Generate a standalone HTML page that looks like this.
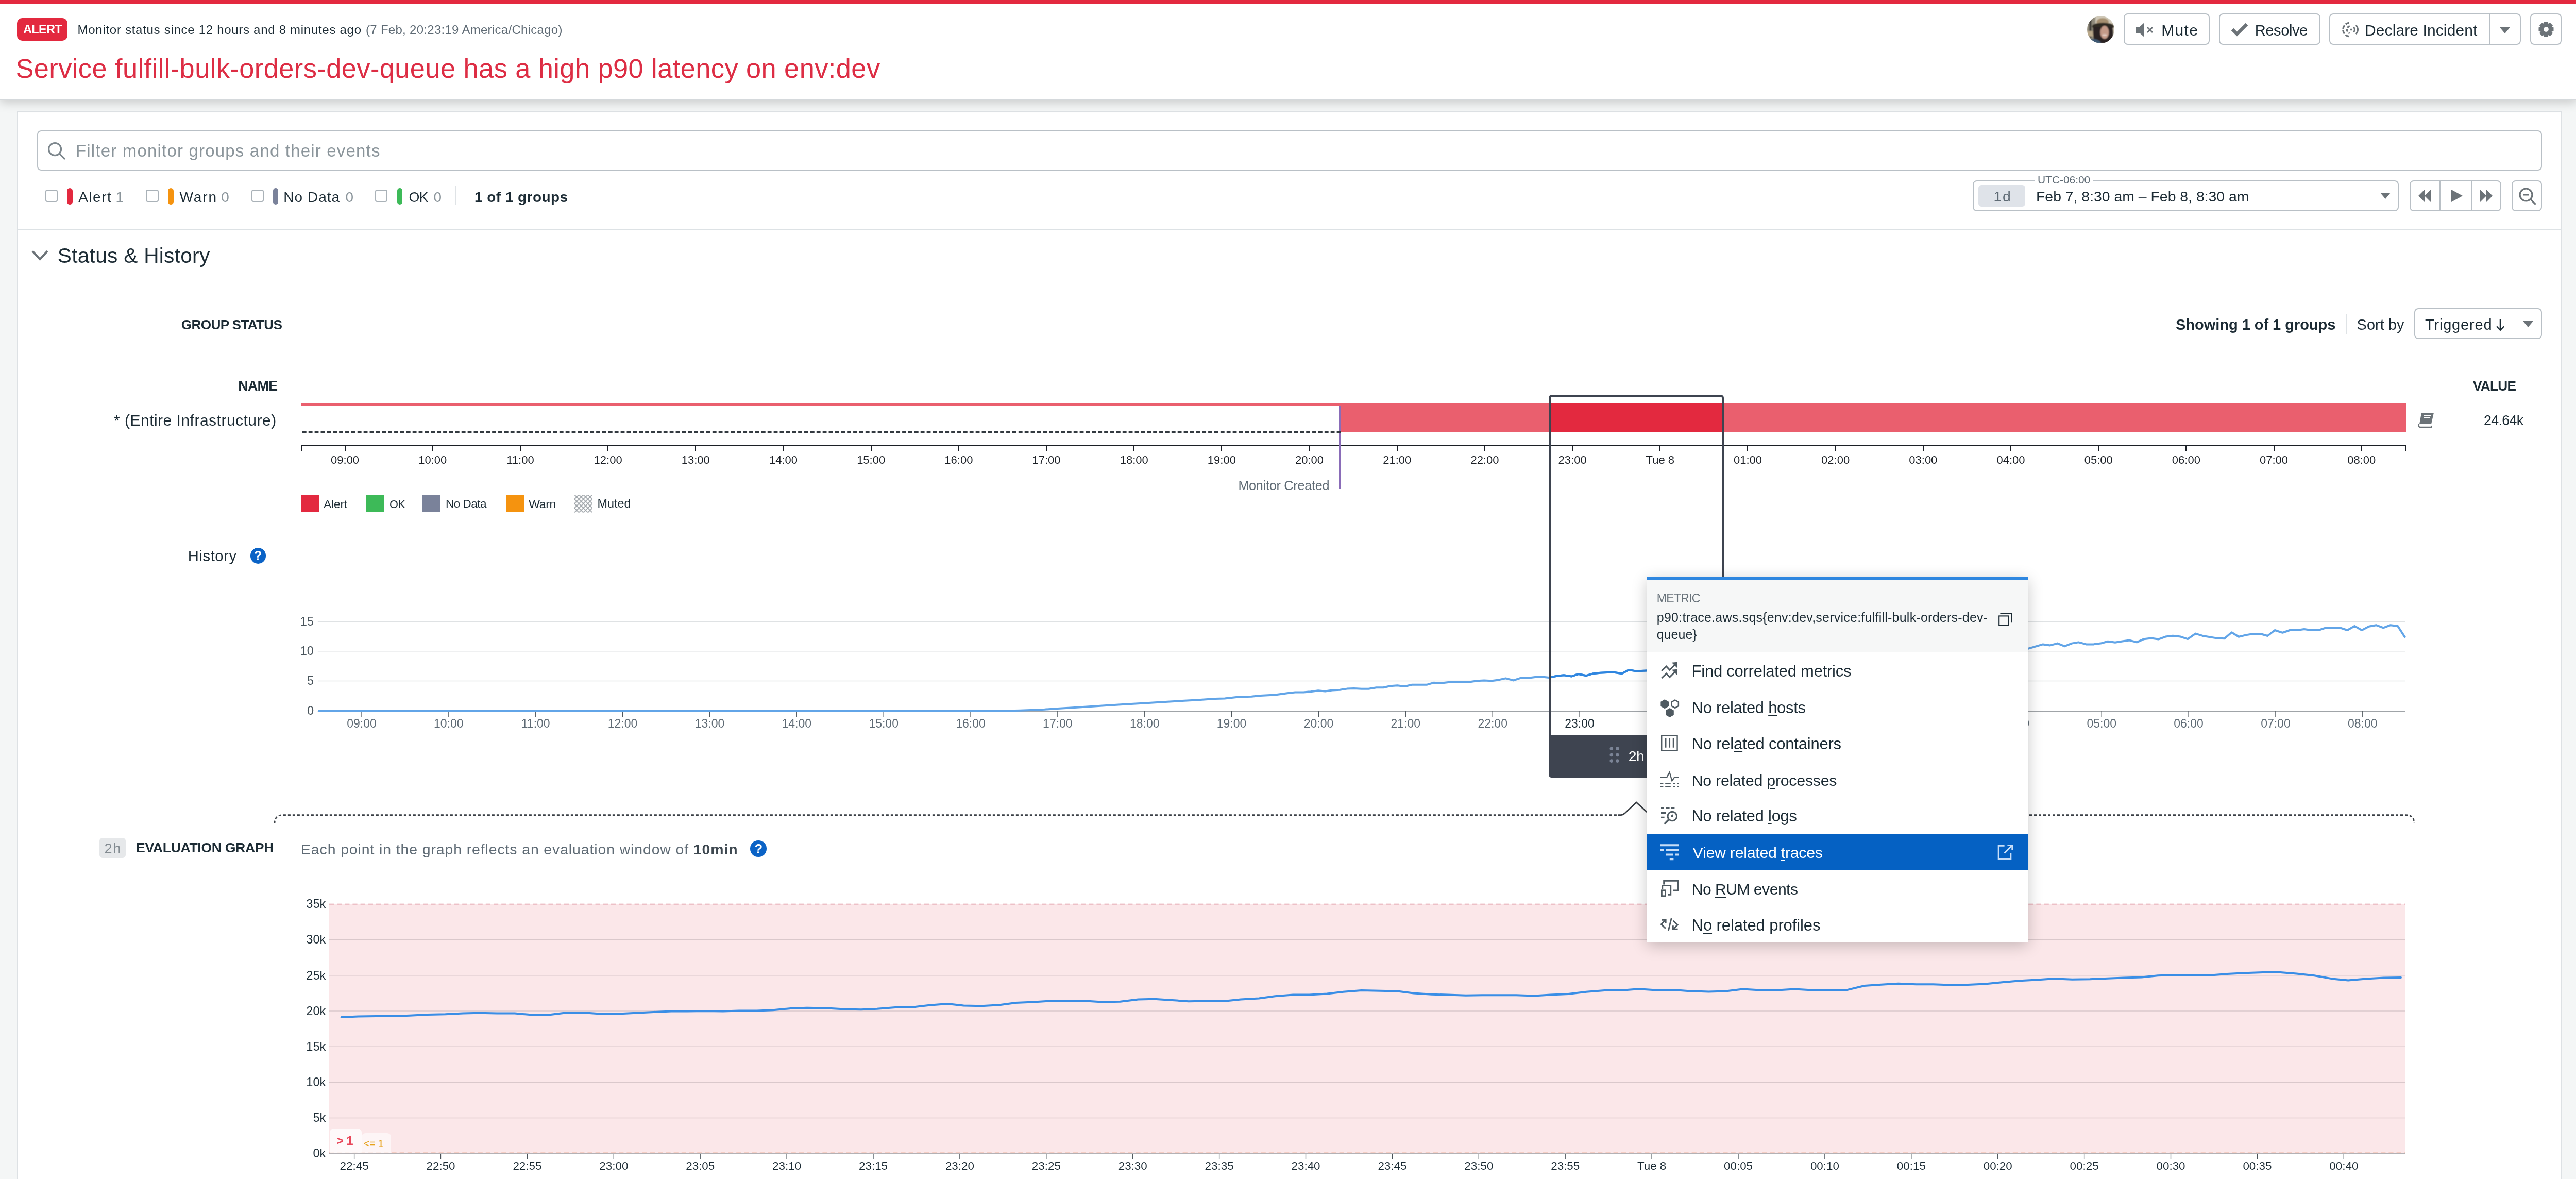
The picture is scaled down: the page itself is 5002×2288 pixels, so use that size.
<!DOCTYPE html>
<html><head><meta charset="utf-8"><style>
html,body{margin:0;padding:0;background:#f4f6f6;overflow:hidden;width:5002px;height:2288px}
#w{zoom:2;will-change:transform;position:relative;width:2501px;height:1144px;overflow:hidden;font-family:"Liberation Sans", sans-serif;background:#f4f6f6}
.t{position:absolute;white-space:nowrap;line-height:1}
.a{position:absolute}
svg.a{overflow:visible}
u{text-decoration-thickness:1.2px;text-underline-offset:2.2px}
</style></head><body><div id="w">
<div class="a" style="left:0px;top:0px;width:2501px;height:96px;background:#fff;box-shadow:0 1px 0 #d5d9dc,0 3px 10px rgba(0,0,0,.2);z-index:5"></div><div class="a" style="left:0;top:0;width:2501px;height:96px;z-index:6"><div class="a" style="left:0px;top:0px;width:2501px;height:3.8px;background:#e3293f"></div><div class="a" style="left:16.5px;top:17.5px;width:49px;height:22px;background:#e3293f;border-radius:5px"></div></div><svg class="a" style="left:2025.5px;top:15.4px;z-index:7" width="26.5" height="26.5" viewBox="0 0 100 100"><defs><clipPath id="avc"><circle cx="50" cy="50" r="50"/></clipPath><filter id="avb"><feGaussianBlur stdDeviation="2.2"/></filter></defs><g clip-path="url(#avc)"><rect width="100" height="100" fill="#cfc8b8"/><g filter="url(#avb)"><rect x="0" y="0" width="30" height="100" fill="#8f8a7c"/><rect x="8" y="10" width="8" height="70" fill="#3b3a35"/><rect x="0" y="55" width="30" height="20" fill="#b9a88a"/><ellipse cx="57" cy="22" rx="22" ry="14" fill="#a58f70"/><ellipse cx="58" cy="38" rx="40" ry="13" fill="#2f2a24"/><path d="M22 40 Q20 95 35 100 H88 Q100 70 92 40 Z" fill="#2a2420"/><ellipse cx="64" cy="60" rx="16" ry="24" fill="#c49a88"/><ellipse cx="64" cy="70" rx="9" ry="3" fill="#e6d2c8"/><path d="M0 88 Q25 78 48 92 L50 100 H0Z" fill="#3f5a74"/></g></g></svg><div class="a" style="left:2061px;top:13.1px;width:83.69999999999982px;height:30.6px;border:1px solid #b9c0c6;border-radius:4px;box-sizing:border-box;background:#fff;z-index:7;"></div><div class="a" style="left:2153.7px;top:13.1px;width:98.30000000000018px;height:30.6px;border:1px solid #b9c0c6;border-radius:4px;box-sizing:border-box;background:#fff;z-index:7;"></div><div class="a" style="left:2260.7px;top:13.1px;width:185.80000000000018px;height:30.6px;border:1px solid #b9c0c6;border-radius:4px;box-sizing:border-box;background:#fff;z-index:7;"></div><div class="a" style="left:2416px;top:13.1px;width:1px;height:30.6px;background:#b9c0c6;z-index:8"></div><div class="a" style="left:2455.5px;top:13.1px;width:30.5px;height:30.6px;border:1px solid #b9c0c6;border-radius:4px;box-sizing:border-box;background:#fff;z-index:7;"></div><svg class="a" style="left:2073px;top:21px;z-index:8" width="18" height="16" viewBox="0 0 18 16"><path d="M0 5h3.5L8 1v14L3.5 11H0z" fill="#6c7378"/><path d="M11 5.5l5 5M16 5.5l-5 5" stroke="#6c7378" stroke-width="1.4"/></svg><svg class="a" style="left:2165.5px;top:22px;z-index:8" width="16" height="13" viewBox="0 0 16 13"><path d="M1 6.5l4.5 4.5L15 1.5" stroke="#6c7378" stroke-width="3.2" fill="none"/></svg><svg class="a" style="left:2273.3px;top:21px;z-index:8" width="15" height="15.5" viewBox="0 0 15 15.5" fill="none" stroke="#6c7378" stroke-width="1.7"><path d="M6.2 1.2A6.6 6.6 0 0 0 6.2 14.3" stroke-dasharray="3.6 1.5"/><path d="M6.8 4.3A3.6 3.6 0 0 0 6.8 11.2" stroke-dasharray="2.6 1.4"/><circle cx="8.3" cy="7.75" r="1.05" fill="#6c7378" stroke="none"/><path d="M10.6 5.3a3.3 3.3 0 0 1 0 4.9M12.9 3.5a5.8 5.8 0 0 1 0 8.5" stroke-width="1.5"/></svg><svg class="a" style="left:2426px;top:26.5px;z-index:8" width="10" height="6" viewBox="0 0 10 6"><path d="M0 0h10L5 6z" fill="#6c7378"/></svg><svg class="a" style="left:2463.6px;top:21.2px;z-index:8" width="15" height="15" viewBox="0 0 15 15"><path fill-rule="evenodd" fill="#6c7378" d="M12.61 5.22 L14.75 5.57 L14.75 9.43 L12.61 9.78 L12.73 9.50 L13.99 11.26 L11.26 13.99 L9.50 12.73 L9.78 12.61 L9.43 14.75 L5.57 14.75 L5.22 12.61 L5.50 12.73 L3.74 13.99 L1.01 11.26 L2.27 9.50 L2.39 9.78 L0.25 9.43 L0.25 5.57 L2.39 5.22 L2.27 5.50 L1.01 3.74 L3.74 1.01 L5.50 2.27 L5.22 2.39 L5.57 0.25 L9.43 0.25 L9.78 2.39 L9.50 2.27 L11.26 1.01 L13.99 3.74 L12.73 5.50Z M7.5 5.1a2.4 2.4 0 1 0 0.001 0z"/></svg><div class="a" style="left:16.6px;top:107.6px;width:2470px;height:1100px;background:#fff;border:1px solid #dde1e4;box-sizing:border-box"></div><div class="a" style="left:36px;top:126.5px;width:2431.2px;height:39px;border:1px solid #b9c0c6;border-radius:4px;box-sizing:border-box"></div><svg class="a" style="left:46px;top:137.5px" width="18" height="18" viewBox="0 0 18 18" fill="none" stroke="#7d878d" stroke-width="1.6"><circle cx="7.3" cy="7.3" r="6"/><path d="M11.6 11.6l5.4 5.4"/></svg><div class="a" style="left:44px;top:184px;width:12.2px;height:12.2px;border:1px solid #aab2b8;border-radius:2px;box-sizing:border-box"></div><div class="a" style="left:65px;top:182.7px;width:5.3px;height:15.6px;background:#e3293f;border-radius:3px"></div><div class="a" style="left:141.6px;top:184px;width:12.2px;height:12.2px;border:1px solid #aab2b8;border-radius:2px;box-sizing:border-box"></div><div class="a" style="left:163px;top:182.7px;width:5.3px;height:15.6px;background:#f5930f;border-radius:3px"></div><div class="a" style="left:243.8px;top:184px;width:12.2px;height:12.2px;border:1px solid #aab2b8;border-radius:2px;box-sizing:border-box"></div><div class="a" style="left:264.8px;top:182.7px;width:5.3px;height:15.6px;background:#7a829a;border-radius:3px"></div><div class="a" style="left:364px;top:184px;width:12.2px;height:12.2px;border:1px solid #aab2b8;border-radius:2px;box-sizing:border-box"></div><div class="a" style="left:385.3px;top:182.7px;width:5.3px;height:15.6px;background:#3dba58;border-radius:3px"></div><div class="a" style="left:441.3px;top:180.5px;width:1px;height:18.5px;background:#dfe3e6"></div><div class="a" style="left:1914.7px;top:174.9px;width:413.3px;height:30.1px;border:1px solid #b9c0c6;border-radius:4px;box-sizing:border-box"></div><div class="a" style="left:1974.7px;top:172px;width:57px;height:5px;background:#fff"></div><div class="a" style="left:1920.1px;top:179.4px;width:45.6px;height:21.1px;background:#dfe3e9;border-radius:3px"></div><svg class="a" style="left:2310px;top:187px" width="10" height="6" viewBox="0 0 10 6"><path d="M0 0h10L5 6z" fill="#6c7378"/></svg><div class="a" style="left:2338.4px;top:174.9px;width:89px;height:30.1px;border:1px solid #b9c0c6;border-radius:4px;box-sizing:border-box"></div><div class="a" style="left:2367.6px;top:174.9px;width:1px;height:30.1px;background:#b9c0c6"></div><div class="a" style="left:2397.8px;top:174.9px;width:1px;height:30.1px;background:#b9c0c6"></div><svg class="a" style="left:2346px;top:183px" width="14" height="14" viewBox="0 0 14 14"><path d="M7 1L1 7l6 6zM13 1L7 7l6 6z" fill="#6c7378"/></svg><svg class="a" style="left:2377px;top:183px" width="14" height="14" viewBox="0 0 14 14"><path d="M2 1l11 6-11 6z" fill="#6c7378"/></svg><svg class="a" style="left:2406px;top:183px" width="14" height="14" viewBox="0 0 14 14"><path d="M1 1l6 6-6 6zM7 1l6 6-6 6z" fill="#6c7378"/></svg><div class="a" style="left:2437.5px;top:174.9px;width:29.7px;height:30.1px;border:1px solid #b9c0c6;border-radius:4px;box-sizing:border-box"></div><svg class="a" style="left:2444px;top:181.5px" width="18" height="18" viewBox="0 0 18 18" fill="none" stroke="#6c7378" stroke-width="1.6"><circle cx="7.5" cy="7.5" r="6"/><path d="M4.5 7.5h6M11.8 11.8l5 5"/></svg><div class="a" style="left:17px;top:222px;width:2468.8px;height:1px;background:#dde2e5"></div><svg class="a" style="left:30.5px;top:242.5px" width="16.5" height="11" viewBox="0 0 16.5 11"><path d="M1 1.2l7.25 7.8L15.5 1.2" stroke="#6c7378" stroke-width="2" fill="none"/></svg><div class="a" style="left:2276.6px;top:305px;width:1.2px;height:19px;background:#dfe3e6"></div><div class="a" style="left:2343px;top:299px;width:124.2px;height:30px;border:1px solid #b9c0c6;border-radius:4px;box-sizing:border-box"></div><svg class="a" style="left:2422px;top:309.5px" width="9" height="12" viewBox="0 0 9 12" fill="none" stroke="#1c2b34" stroke-width="1.25"><path d="M4.5 0.3V10.8M1 7.2L4.5 10.9L8 7.2"/></svg><svg class="a" style="left:2448.4px;top:311.5px" width="10" height="6" viewBox="0 0 10 6"><path d="M0 0h10L5 6z" fill="#6c7378"/></svg><svg class="a" style="left:2346px;top:399.5px" width="18" height="16" viewBox="0 0 18 16"><path d="M4 1h12l-2.5 11H2z" fill="#6c7378"/><path d="M2 12.2h11.5l-.3 1.3H1.8z" fill="#fff"/><path d="M1.5 12c-.6 2 0 3 1.5 3h10.5l.4-1.5" stroke="#6c7378" stroke-width="1.3" fill="none"/><path d="M6.5 3.5h6.5M6 5.5h6.5" stroke="#fff" stroke-width="1"/></svg><div class="a" style="left:292.2px;top:391.6px;width:1008.3px;height:2.2px;background:#ea5f6e"></div><div class="a" style="left:1300.5px;top:391.6px;width:1034.9px;height:27.3px;background:#ea5f6e"></div><svg class="a" style="left:292.2px;top:417.9px;z-index:1" width="1009.3" height="2"><line x1="0" y1="1" x2="1009.3" y2="1" stroke="#333a40" stroke-width="2" stroke-dasharray="3.9 2.04" stroke-dashoffset="-1.44"/></svg><div class="a" style="left:1504px;top:391.6px;width:167.7px;height:27.3px;background:#e3293f"></div><div class="a" style="left:292.2px;top:432px;width:2043.2px;height:1.1px;background:#1c2026"></div><div class="a" style="left:292.2px;top:432px;width:1px;height:6px;background:#1c2026"></div><div class="a" style="left:2334.4px;top:432px;width:1px;height:6px;background:#1c2026"></div><div class="a" style="left:334.3px;top:432px;width:1px;height:6px;background:#1c2026"></div><div class="a" style="left:419.39px;top:432px;width:1px;height:6px;background:#1c2026"></div><div class="a" style="left:504.48px;top:432px;width:1px;height:6px;background:#1c2026"></div><div class="a" style="left:589.57px;top:432px;width:1px;height:6px;background:#1c2026"></div><div class="a" style="left:674.6600000000001px;top:432px;width:1px;height:6px;background:#1c2026"></div><div class="a" style="left:759.75px;top:432px;width:1px;height:6px;background:#1c2026"></div><div class="a" style="left:844.84px;top:432px;width:1px;height:6px;background:#1c2026"></div><div class="a" style="left:929.9300000000001px;top:432px;width:1px;height:6px;background:#1c2026"></div><div class="a" style="left:1015.02px;top:432px;width:1px;height:6px;background:#1c2026"></div><div class="a" style="left:1100.1100000000001px;top:432px;width:1px;height:6px;background:#1c2026"></div><div class="a" style="left:1185.2px;top:432px;width:1px;height:6px;background:#1c2026"></div><div class="a" style="left:1270.29px;top:432px;width:1px;height:6px;background:#1c2026"></div><div class="a" style="left:1355.38px;top:432px;width:1px;height:6px;background:#1c2026"></div><div class="a" style="left:1440.47px;top:432px;width:1px;height:6px;background:#1c2026"></div><div class="a" style="left:1525.56px;top:432px;width:1px;height:6px;background:#1c2026"></div><div class="a" style="left:1610.65px;top:432px;width:1px;height:6px;background:#1c2026"></div><div class="a" style="left:1695.74px;top:432px;width:1px;height:6px;background:#1c2026"></div><div class="a" style="left:1780.83px;top:432px;width:1px;height:6px;background:#1c2026"></div><div class="a" style="left:1865.92px;top:432px;width:1px;height:6px;background:#1c2026"></div><div class="a" style="left:1951.01px;top:432px;width:1px;height:6px;background:#1c2026"></div><div class="a" style="left:2036.1000000000001px;top:432px;width:1px;height:6px;background:#1c2026"></div><div class="a" style="left:2121.19px;top:432px;width:1px;height:6px;background:#1c2026"></div><div class="a" style="left:2206.28px;top:432px;width:1px;height:6px;background:#1c2026"></div><div class="a" style="left:2291.3700000000003px;top:432px;width:1px;height:6px;background:#1c2026"></div><div class="a" style="left:1299.5px;top:393.8px;width:2px;height:80px;background:#8a6cb8"></div><div class="a" style="left:292px;top:479.9px;width:17.3px;height:17.3px;background:#e3293f"></div><div class="a" style="left:355.6px;top:479.9px;width:17.3px;height:17.3px;background:#3dba58"></div><div class="a" style="left:410.1px;top:479.9px;width:17.3px;height:17.3px;background:#7a829a"></div><div class="a" style="left:491.2px;top:479.9px;width:17.3px;height:17.3px;background:#f5930f"></div><svg class="a" style="left:557.5px;top:479.9px" width="17.3" height="17.3" viewBox="0 0 17.3 17.3"><defs><pattern id="hatch" width="4.33" height="4.33" patternUnits="userSpaceOnUse"><path d="M0 0L4.33 4.33M4.33 0L0 4.33" stroke="#9aa0a5" stroke-width="0.8"/></pattern></defs><rect width="17.3" height="17.3" fill="url(#hatch)"/></svg><div class="a" style="left:242.8px;top:531.6px;width:15.2px;height:15.2px;border-radius:50%;background:#0b63c6"></div><svg class="a" style="left:0;top:0" width="2501" height="1144" viewBox="0 0 2501 1144"><line x1="308.4" y1="660.76" x2="2334.4" y2="660.76" stroke="#dfe2e4" stroke-width="0.7"/><line x1="308.4" y1="631.93" x2="2334.4" y2="631.93" stroke="#dfe2e4" stroke-width="0.7"/><line x1="308.4" y1="603.10" x2="2334.4" y2="603.10" stroke="#dfe2e4" stroke-width="0.7"/><line x1="308.4" y1="690" x2="2334.4" y2="690" stroke="#80868b" stroke-width="0.75"/><line x1="351.00" y1="690" x2="351.00" y2="695.5" stroke="#50585e" stroke-width="0.65"/><line x1="435.43" y1="690" x2="435.43" y2="695.5" stroke="#50585e" stroke-width="0.65"/><line x1="519.86" y1="690" x2="519.86" y2="695.5" stroke="#50585e" stroke-width="0.65"/><line x1="604.29" y1="690" x2="604.29" y2="695.5" stroke="#50585e" stroke-width="0.65"/><line x1="688.72" y1="690" x2="688.72" y2="695.5" stroke="#50585e" stroke-width="0.65"/><line x1="773.15" y1="690" x2="773.15" y2="695.5" stroke="#50585e" stroke-width="0.65"/><line x1="857.58" y1="690" x2="857.58" y2="695.5" stroke="#50585e" stroke-width="0.65"/><line x1="942.01" y1="690" x2="942.01" y2="695.5" stroke="#50585e" stroke-width="0.65"/><line x1="1026.44" y1="690" x2="1026.44" y2="695.5" stroke="#50585e" stroke-width="0.65"/><line x1="1110.87" y1="690" x2="1110.87" y2="695.5" stroke="#50585e" stroke-width="0.65"/><line x1="1195.30" y1="690" x2="1195.30" y2="695.5" stroke="#50585e" stroke-width="0.65"/><line x1="1279.73" y1="690" x2="1279.73" y2="695.5" stroke="#50585e" stroke-width="0.65"/><line x1="1364.16" y1="690" x2="1364.16" y2="695.5" stroke="#50585e" stroke-width="0.65"/><line x1="1448.59" y1="690" x2="1448.59" y2="695.5" stroke="#50585e" stroke-width="0.65"/><line x1="1533.02" y1="690" x2="1533.02" y2="695.5" stroke="#50585e" stroke-width="0.65"/><line x1="1617.45" y1="690" x2="1617.45" y2="695.5" stroke="#50585e" stroke-width="0.65"/><line x1="1701.88" y1="690" x2="1701.88" y2="695.5" stroke="#50585e" stroke-width="0.65"/><line x1="1786.31" y1="690" x2="1786.31" y2="695.5" stroke="#50585e" stroke-width="0.65"/><line x1="1870.74" y1="690" x2="1870.74" y2="695.5" stroke="#50585e" stroke-width="0.65"/><line x1="1955.17" y1="690" x2="1955.17" y2="695.5" stroke="#50585e" stroke-width="0.65"/><line x1="2039.60" y1="690" x2="2039.60" y2="695.5" stroke="#50585e" stroke-width="0.65"/><line x1="2124.03" y1="690" x2="2124.03" y2="695.5" stroke="#50585e" stroke-width="0.65"/><line x1="2208.46" y1="690" x2="2208.46" y2="695.5" stroke="#50585e" stroke-width="0.65"/><line x1="2292.89" y1="690" x2="2292.89" y2="695.5" stroke="#50585e" stroke-width="0.65"/></svg><svg class="a" style="left:0;top:0" width="2501" height="1144" viewBox="0 0 2501 1144"><defs><clipPath id="selc"><rect x="1504" y="560" width="168" height="140"/></clipPath></defs><polyline points="308.8,689.6 980.0,689.6 990.1,689.4 1003.6,688.9 1013.8,688.4 1026.4,687.5 1039.1,686.8 1056.8,685.6 1073.7,684.5 1091.5,683.4 1110.9,682.2 1131.1,681.0 1149.7,679.9 1161.5,679.2 1179.3,678.0 1188.5,677.8 1202.1,676.3 1214.7,675.9 1223.2,675.0 1237.5,674.3 1249.3,672.6 1256.9,671.8 1265.1,671.8 1271.9,671.1 1279.3,670.1 1286.1,670.7 1292.9,669.8 1300.4,669.4 1307.2,668.3 1314.0,668.0 1321.4,668.4 1328.2,668.4 1335.7,667.1 1342.5,667.1 1349.3,665.6 1356.1,665.1 1363.5,666.0 1370.3,664.4 1377.1,664.4 1384.6,664.4 1391.4,662.4 1398.2,662.9 1405.6,662.0 1412.4,662.0 1419.2,661.6 1426.7,661.6 1433.5,660.6 1440.3,660.2 1447.7,660.6 1454.5,659.7 1461.3,658.2 1468.8,660.2 1475.6,657.9 1483.0,657.9 1489.8,657.0 1496.6,656.7 1503.4,657.5 1510.9,655.9 1517.7,655.1 1525.1,656.3 1531.9,654.0 1539.4,655.6 1546.2,653.6 1553.0,652.9 1559.8,652.5 1567.2,652.5 1574.0,653.6 1580.8,650.0 1588.3,651.3 1595.1,650.9 1604.8,650.4 1659.7,646.3 1744.1,641.2 1828.5,636.5 1913.0,632.5 1946.7,630.8 1968.2,629.4 1982.7,625.2 1989.7,626.2 1996.7,624.3 2003.7,627.1 2010.7,624.3 2017.2,623.2 2024.7,625.2 2031.7,625.2 2038.7,624.3 2045.7,622.4 2052.7,623.4 2059.7,622.3 2066.7,621.3 2073.7,623.2 2080.7,620.1 2087.7,619.2 2094.7,620.3 2101.7,617.8 2108.7,616.9 2116.2,617.8 2123.2,620.1 2130.7,614.8 2137.7,616.9 2137.8,617.0 2151.8,619.3 2158.8,619.6 2165.8,613.6 2172.7,617.9 2179.7,616.2 2186.7,615.0 2193.7,615.0 2200.7,617.0 2207.7,611.5 2215.2,613.9 2222.2,611.5 2229.2,611.5 2236.2,610.5 2243.2,611.5 2250.1,611.5 2257.1,609.2 2264.1,609.2 2271.1,609.2 2278.1,611.5 2285.1,607.5 2292.1,611.5 2299.1,607.9 2306.0,606.6 2313.0,609.2 2320.0,606.6 2327.0,607.5 2334.3,618.8" fill="none" stroke="#62a5e8" stroke-width="2" stroke-linejoin="round"/><polyline points="308.8,689.6 980.0,689.6 990.1,689.4 1003.6,688.9 1013.8,688.4 1026.4,687.5 1039.1,686.8 1056.8,685.6 1073.7,684.5 1091.5,683.4 1110.9,682.2 1131.1,681.0 1149.7,679.9 1161.5,679.2 1179.3,678.0 1188.5,677.8 1202.1,676.3 1214.7,675.9 1223.2,675.0 1237.5,674.3 1249.3,672.6 1256.9,671.8 1265.1,671.8 1271.9,671.1 1279.3,670.1 1286.1,670.7 1292.9,669.8 1300.4,669.4 1307.2,668.3 1314.0,668.0 1321.4,668.4 1328.2,668.4 1335.7,667.1 1342.5,667.1 1349.3,665.6 1356.1,665.1 1363.5,666.0 1370.3,664.4 1377.1,664.4 1384.6,664.4 1391.4,662.4 1398.2,662.9 1405.6,662.0 1412.4,662.0 1419.2,661.6 1426.7,661.6 1433.5,660.6 1440.3,660.2 1447.7,660.6 1454.5,659.7 1461.3,658.2 1468.8,660.2 1475.6,657.9 1483.0,657.9 1489.8,657.0 1496.6,656.7 1503.4,657.5 1510.9,655.9 1517.7,655.1 1525.1,656.3 1531.9,654.0 1539.4,655.6 1546.2,653.6 1553.0,652.9 1559.8,652.5 1567.2,652.5 1574.0,653.6 1580.8,650.0 1588.3,651.3 1595.1,650.9 1604.8,650.4 1659.7,646.3 1744.1,641.2 1828.5,636.5 1913.0,632.5 1946.7,630.8 1968.2,629.4 1982.7,625.2 1989.7,626.2 1996.7,624.3 2003.7,627.1 2010.7,624.3 2017.2,623.2 2024.7,625.2 2031.7,625.2 2038.7,624.3 2045.7,622.4 2052.7,623.4 2059.7,622.3 2066.7,621.3 2073.7,623.2 2080.7,620.1 2087.7,619.2 2094.7,620.3 2101.7,617.8 2108.7,616.9 2116.2,617.8 2123.2,620.1 2130.7,614.8 2137.7,616.9 2137.8,617.0 2151.8,619.3 2158.8,619.6 2165.8,613.6 2172.7,617.9 2179.7,616.2 2186.7,615.0 2193.7,615.0 2200.7,617.0 2207.7,611.5 2215.2,613.9 2222.2,611.5 2229.2,611.5 2236.2,610.5 2243.2,611.5 2250.1,611.5 2257.1,609.2 2264.1,609.2 2271.1,609.2 2278.1,611.5 2285.1,607.5 2292.1,611.5 2299.1,607.9 2306.0,606.6 2313.0,609.2 2320.0,606.6 2327.0,607.5 2334.3,618.8" fill="none" stroke="#2f86e0" stroke-width="2" stroke-linejoin="round" clip-path="url(#selc)"/></svg><div class="a" style="left:1503.2px;top:383px;width:169.6px;height:371.6px;border:2px solid #3e4450;border-radius:3px;box-sizing:border-box"></div><div class="a" style="left:1503.2px;top:713.5px;width:169.6px;height:41.1px;background:#3e4450;border-radius:0 0 3px 3px"></div><div class="a" style="left:1505.2px;top:752.3px;width:165.6px;height:0.6px;background:#c9ccd2"></div><svg class="a" style="left:1561.5px;top:724px" width="10" height="17" viewBox="0 0 10 17" fill="#7b8496"><circle cx="2.4" cy="2.4" r="1.65"/><circle cx="8.2" cy="2.4" r="1.65"/><circle cx="2.4" cy="8.5" r="1.65"/><circle cx="8.2" cy="8.5" r="1.65"/><circle cx="2.4" cy="14.3" r="1.65"/><circle cx="8.2" cy="14.3" r="1.65"/></svg><svg class="a" style="left:0;top:0" width="2501" height="1144" viewBox="0 0 2501 1144" fill="none" stroke="#3a3f45" stroke-width="1.35"><path d="M266.5 799 Q266.5 790.8 274.5 790.8 H1570.5" stroke-dasharray="2.5 2"/><path d="M1570.5 790.8 H1573 Q1575 790.8 1577 789 L1588.1 778.6 L1599.5 789 Q1601.5 790.8 1603.5 790.8 H1605"/><path d="M1605 790.8 H2335 Q2343 790.8 2343 799" stroke-dasharray="2.5 2"/></svg><div class="a" style="left:96.3px;top:813.2px;width:25.7px;height:19.5px;background:#e6e8ea;border-radius:3px"></div><span class="t" style="left:292px;top:816.98px;font-size:14.2px;color:#5f6b75;letter-spacing:0.453px">Each point in the graph reflects an evaluation window of <b style="color:#3e4850">10min</b></span><div class="a" style="left:728.2px;top:815.7px;width:15.7px;height:15.7px;border-radius:50%;background:#0b63c6"></div><svg class="a" style="left:0;top:0" width="2501" height="1144" viewBox="0 0 2501 1144"><rect x="319.4" y="877.31" width="2015.0" height="241.99" fill="#fbe7e9"/><line x1="319.4" y1="1084.73" x2="2334.4" y2="1084.73" stroke="#dac8cb" stroke-width="0.7"/><line x1="319.4" y1="1050.16" x2="2334.4" y2="1050.16" stroke="#dac8cb" stroke-width="0.7"/><line x1="319.4" y1="1015.59" x2="2334.4" y2="1015.59" stroke="#dac8cb" stroke-width="0.7"/><line x1="319.4" y1="981.02" x2="2334.4" y2="981.02" stroke="#dac8cb" stroke-width="0.7"/><line x1="319.4" y1="946.45" x2="2334.4" y2="946.45" stroke="#dac8cb" stroke-width="0.7"/><line x1="319.4" y1="911.88" x2="2334.4" y2="911.88" stroke="#dac8cb" stroke-width="0.7"/><line x1="319.4" y1="877.31" x2="2334.4" y2="877.31" stroke="#e09aa5" stroke-width="0.8" stroke-dasharray="4.6 3"/><line x1="319.4" y1="1118.6" x2="2334.4" y2="1118.6" stroke="#f0b49e" stroke-width="0.8" stroke-dasharray="4.6 3"/><line x1="319.4" y1="1119.6" x2="2334.4" y2="1119.6" stroke="#6c7378" stroke-width="0.8"/><line x1="343.80" y1="1119.6" x2="343.80" y2="1125" stroke="#4a5258" stroke-width="0.65"/><line x1="427.75" y1="1119.6" x2="427.75" y2="1125" stroke="#4a5258" stroke-width="0.65"/><line x1="511.70" y1="1119.6" x2="511.70" y2="1125" stroke="#4a5258" stroke-width="0.65"/><line x1="595.65" y1="1119.6" x2="595.65" y2="1125" stroke="#4a5258" stroke-width="0.65"/><line x1="679.60" y1="1119.6" x2="679.60" y2="1125" stroke="#4a5258" stroke-width="0.65"/><line x1="763.55" y1="1119.6" x2="763.55" y2="1125" stroke="#4a5258" stroke-width="0.65"/><line x1="847.50" y1="1119.6" x2="847.50" y2="1125" stroke="#4a5258" stroke-width="0.65"/><line x1="931.45" y1="1119.6" x2="931.45" y2="1125" stroke="#4a5258" stroke-width="0.65"/><line x1="1015.40" y1="1119.6" x2="1015.40" y2="1125" stroke="#4a5258" stroke-width="0.65"/><line x1="1099.35" y1="1119.6" x2="1099.35" y2="1125" stroke="#4a5258" stroke-width="0.65"/><line x1="1183.30" y1="1119.6" x2="1183.30" y2="1125" stroke="#4a5258" stroke-width="0.65"/><line x1="1267.25" y1="1119.6" x2="1267.25" y2="1125" stroke="#4a5258" stroke-width="0.65"/><line x1="1351.20" y1="1119.6" x2="1351.20" y2="1125" stroke="#4a5258" stroke-width="0.65"/><line x1="1435.15" y1="1119.6" x2="1435.15" y2="1125" stroke="#4a5258" stroke-width="0.65"/><line x1="1519.10" y1="1119.6" x2="1519.10" y2="1125" stroke="#4a5258" stroke-width="0.65"/><line x1="1603.05" y1="1119.6" x2="1603.05" y2="1125" stroke="#4a5258" stroke-width="0.65"/><line x1="1687.00" y1="1119.6" x2="1687.00" y2="1125" stroke="#4a5258" stroke-width="0.65"/><line x1="1770.95" y1="1119.6" x2="1770.95" y2="1125" stroke="#4a5258" stroke-width="0.65"/><line x1="1854.90" y1="1119.6" x2="1854.90" y2="1125" stroke="#4a5258" stroke-width="0.65"/><line x1="1938.85" y1="1119.6" x2="1938.85" y2="1125" stroke="#4a5258" stroke-width="0.65"/><line x1="2022.80" y1="1119.6" x2="2022.80" y2="1125" stroke="#4a5258" stroke-width="0.65"/><line x1="2106.75" y1="1119.6" x2="2106.75" y2="1125" stroke="#4a5258" stroke-width="0.65"/><line x1="2190.70" y1="1119.6" x2="2190.70" y2="1125" stroke="#4a5258" stroke-width="0.65"/><line x1="2274.65" y1="1119.6" x2="2274.65" y2="1125" stroke="#4a5258" stroke-width="0.65"/><polyline points="331.3,987.0 347.6,986.3 364.8,986.0 382.0,986.0 397.7,985.4 414.9,984.5 432.2,984.1 449.4,983.2 465.1,982.9 482.3,983.2 499.5,983.2 516.8,984.8 532.4,984.8 549.7,982.6 566.9,982.6 582.6,983.8 599.8,983.8 617.0,982.9 634.2,982.0 651.5,981.3 667.1,981.3 684.4,981.0 701.6,981.3 717.3,980.7 734.5,980.7 750.2,980.1 767.4,978.5 783.1,977.9 802.4,978.2 819.9,979.3 835.6,979.6 851.3,978.9 868.8,977.5 886.3,977.2 902.0,975.4 919.5,974.0 935.2,975.8 952.6,976.1 970.1,975.1 985.8,973.0 1003.3,972.3 1019.0,971.2 1036.5,971.4 1054.0,971.2 1069.7,972.3 1087.2,971.9 1104.6,969.8 1120.3,969.4 1137.8,970.5 1153.5,971.6 1171.0,971.2 1188.5,971.4 1204.2,969.8 1221.7,968.7 1237.4,966.6 1254.9,965.2 1270.6,965.2 1288.0,964.2 1303.8,962.4 1321.2,961.0 1338.7,961.4 1356.2,961.7 1371.9,963.8 1389.4,964.9 1405.1,965.2 1422.6,965.9 1438.3,965.6 1455.8,965.6 1471.5,965.6 1488.9,966.3 1504.7,965.2 1522.1,964.5 1539.6,962.4 1557.1,961.0 1572.8,961.0 1590.3,959.6 1607.7,960.7 1624.5,960.5 1640.9,961.7 1658.3,962.2 1674.8,961.7 1691.3,959.7 1708.6,960.7 1725.1,960.7 1741.6,959.7 1759.0,960.7 1775.5,960.7 1792.0,960.7 1809.3,956.5 1825.8,955.4 1842.3,954.4 1859.6,955.1 1876.1,955.1 1893.4,955.7 1909.9,955.5 1926.4,954.7 1942.9,953.1 1960.2,951.6 1976.7,950.8 1993.2,949.6 2011.1,950.4 2028.3,950.1 2045.6,949.4 2061.2,948.8 2078.4,948.2 2094.1,946.6 2111.3,946.0 2128.6,946.3 2145.8,946.3 2161.5,945.0 2178.7,944.1 2195.9,943.5 2213.2,943.5 2228.8,944.7 2246.1,946.6 2263.3,949.7 2278.9,951.3 2296.2,949.7 2313.4,948.8 2330.0,948.5" fill="none" stroke="#3a8ee6" stroke-width="2" stroke-linejoin="round" stroke-linecap="round"/></svg><div class="a" style="left:319.8px;top:1095px;width:31.1px;height:24px;background:rgba(255,255,255,.75);border-radius:4px 4px 0 0"></div><div class="a" style="left:351.1px;top:1099.5px;width:28.6px;height:19.5px;background:rgba(255,255,255,.6);border-radius:4px 4px 0 0"></div><div class="a" style="left:1598.4px;top:560px;width:369.6px;height:354.7px;background:#fff;box-shadow:0 3px 14px rgba(0,0,0,.22);border-top:3px solid #2f87e0;box-sizing:border-box;z-index:20"></div><div class="a" style="left:1598.4px;top:563px;width:369.6px;height:69.8px;background:#f6f7f7;z-index:21"></div><svg class="a" style="left:0;top:0;z-index:22" width="2501" height="1144" viewBox="0 0 2501 1144" fill="none" stroke="#1c2b34" stroke-width="1.05"><rect x="1940.1" y="597.7" width="9.2" height="8.9"/><path d="M1941.2 595.4H1952.3V604.1"/></svg><div class="a" style="left:1598.4px;top:809.5px;width:369.6px;height:35px;background:#0561c3;z-index:21"></div><svg class="a" style="left:0;top:0;z-index:22" width="2501" height="1144" viewBox="0 0 2501 1144"><g fill="none" stroke="#4f5a61" stroke-width="1.5" stroke-linejoin="miter"><path d="M1612.6 651 L1617.2 646.6 L1620.4 650 L1626.6 643.9"/><path d="M1612.6 658 L1617.2 653.6 L1620.4 657 L1626.6 650.9"/></g><g fill="#4f5a61"><path d="M1628 642.4 L1622.4 642.9 L1627.5 648z"/><path d="M1628 649.4 L1622.4 649.9 L1627.5 655z"/></g><path fill="#4f5a61" d="M1615.60 678.60 L1619.50 680.85 L1619.50 685.35 L1615.60 687.60 L1611.70 685.35 L1611.70 680.85Z M1620.50 687.00 L1624.40 689.25 L1624.40 693.75 L1620.50 696.00 L1616.60 693.75 L1616.60 689.25Z"/><path fill="none" stroke="#4f5a61" stroke-width="1.25" d="M1625.60 679.25 L1628.93 681.18 L1628.93 685.02 L1625.60 686.95 L1622.27 685.02 L1622.27 681.18Z"/><g fill="none" stroke="#4f5a61"><rect x="1612.6" y="713.6" width="15.2" height="14.7" stroke-width="1.2"/><path d="M1616.5 716.4v9M1620.3 716.4v9M1624.1 716.4v9" stroke-width="1.45"/></g><g fill="none" stroke="#4f5a61" stroke-width="1.15"><path d="M1611.5 754.3H1617.6L1620.3 749.4L1622.7 757.7L1625 754.3H1629.4"/><path d="M1611.5 760.2h2.7M1616.1 760.2h5.3M1623.7 760.2h1.9M1627.5 760.2h1.9M1611.5 763.2h2.7M1616.1 763.2h5.3M1623.7 763.2h1.9M1627.5 763.2h1.9"/></g><g fill="none" stroke="#4f5a61"><path d="M1612 784.1h2.9M1616.8 784.1h3.5M1621.8 784.1h3.4M1612 788.6h5M1612 793.2h3.3" stroke-width="1.7"/><circle cx="1622.9" cy="792" r="4.4" stroke-width="1.5"/><path d="M1619.3 795.6L1615.4 799.5" stroke-width="1.9"/></g><path fill="#4f5a61" d="M1621.6 792.6a2.2 2.2 0 0 1 2.4 -2.4v2.4z"/><g fill="none" stroke="#c8def8" stroke-width="2"><path d="M1611.4 820.1h18.1M1611.4 824.8h3.4M1617 824.8h12.5M1617 829.2h6.7M1626 829.2h3.5M1620.4 833.6h3.8"/></g><g fill="none" stroke="#4f5a61" stroke-width="1.4"><path d="M1614.8 858.2V854.7H1628.4V864H1623.7"/><path d="M1613.4 862.5V859.3H1621.4V868.2H1618.6"/><rect x="1612.7" y="863.9" width="3.5" height="5.5"/></g><g fill="none" stroke="#4f5a61" stroke-width="1.4"><path d="M1616.4 900.8L1612.2 896.9L1616.3 892.9"/><path d="M1612.9 892.7H1616.6V895.9"/><path d="M1622.1 891L1619.1 903.3"/><path d="M1623.9 893.4L1628.1 897.4L1624 901.5"/><path d="M1623.7 898.1V901.6H1628.3"/></g><g fill="none" stroke="#c8def8" stroke-width="1.5"><path d="M1945.3 820.6H1939.6V833.6H1951.4V827.8"/><path d="M1945.3 827.8L1952.6 820.5M1948.2 820.3H1952.9V825"/></g></svg><span class="t" style="left:22.50px;top:23.15px;font-size:11.752402072695375px;color:#fff;font-weight:700;letter-spacing:-0.350px;z-index:7">ALERT</span><span class="t" style="left:75.30px;top:23.19px;font-size:12px;color:#1c2b34;letter-spacing:0.356px;z-index:7">Monitor status since 12 hours and 8 minutes ago</span><span class="t" style="left:355.00px;top:23.19px;font-size:12px;color:#5f6b75;letter-spacing:0.145px;z-index:7">(7 Feb, 20:23:19 America/Chicago)</span><span class="t" style="left:15.20px;top:53.37px;font-size:26.2px;color:#dd2d44;letter-spacing:0.210px;z-index:7">Service fulfill-bulk-orders-dev-queue has a high p90 latency on env:dev</span><span class="t" style="left:2097.60px;top:22.05px;font-size:15px;color:#1c2b34;letter-spacing:0.665px;z-index:8">Mute</span><span class="t" style="left:2188.33px;top:22.39px;font-size:14.595605898222402px;color:#1c2b34;letter-spacing:-0.237px;z-index:8">Resolve</span><span class="t" style="left:2295.00px;top:22.05px;font-size:15px;color:#1c2b34;letter-spacing:0.052px;z-index:8">Declare Incident</span><span class="t" style="left:73.50px;top:138.13px;font-size:16.5px;color:#8b959b;letter-spacing:0.593px;">Filter monitor groups and their events</span><span class="t" style="left:76.10px;top:184.45px;font-size:14px;color:#1c2b34;letter-spacing:0.751px;">Alert</span><span class="t" style="left:112.30px;top:184.45px;font-size:14px;color:#8b959b;">1</span><span class="t" style="left:174.30px;top:184.45px;font-size:14px;color:#1c2b34;letter-spacing:0.919px;">Warn</span><span class="t" style="left:214.60px;top:184.45px;font-size:14px;color:#8b959b;">0</span><span class="t" style="left:275.10px;top:184.45px;font-size:14px;color:#1c2b34;letter-spacing:0.521px;">No Data</span><span class="t" style="left:335.20px;top:184.45px;font-size:14px;color:#8b959b;">0</span><span class="t" style="left:396.70px;top:184.93px;font-size:13.43380861109812px;color:#1c2b34;letter-spacing:-0.350px;">OK</span><span class="t" style="left:420.80px;top:184.45px;font-size:14px;color:#8b959b;">0</span><span class="t" style="left:460.50px;top:184.45px;font-size:14px;color:#1c2b34;font-weight:700;letter-spacing:0.224px;">1 of 1 groups</span><span class="t" style="left:1977.50px;top:169.01px;font-size:10.5px;color:#5f6b75;letter-spacing:-0.026px;">UTC-06:00</span><span class="t" style="left:1934.70px;top:183.38px;font-size:14.2px;color:#5f6b75;letter-spacing:0.910px;">1d</span><span class="t" style="left:1976.00px;top:183.58px;font-size:14.2px;color:#1c2b34;">Feb 7, 8:30 am – Feb 8, 8:30 am</span><span class="t" style="left:55.90px;top:237.82px;font-size:20.3px;color:#1c2b34;letter-spacing:0.150px;">Status &amp; History</span><span class="t" style="left:175.90px;top:308.40px;font-size:13.116318107242153px;color:#1c2b34;font-weight:700;letter-spacing:-0.350px;">GROUP STATUS</span><span class="t" style="left:2111.50px;top:308.03px;font-size:14.5px;color:#1c2b34;font-weight:700;letter-spacing:-0.015px;">Showing 1 of 1 groups</span><span class="t" style="left:2287.30px;top:308.03px;font-size:14.5px;color:#1c2b34;">Sort by</span><span class="t" style="left:2353.50px;top:308.03px;font-size:14.5px;color:#1c2b34;letter-spacing:0.406px;">Triggered</span><span class="t" style="left:231.10px;top:367.77px;font-size:13.380931986556542px;color:#1c2b34;font-weight:700;letter-spacing:-0.312px;">NAME</span><span class="t" style="left:2400.00px;top:367.91px;font-size:13.10302890992591px;color:#1c2b34;font-weight:700;letter-spacing:-0.350px;">VALUE</span><span class="t" style="left:110.50px;top:400.40px;font-size:15px;color:#1c2b34;letter-spacing:0.245px;">* (Entire Infrastructure)</span><span class="t" style="left:2410.50px;top:401.64px;font-size:13.425125377266435px;color:#1c2b34;letter-spacing:-0.350px;">24.64k</span><span class="t" style="left:321.03px;top:440.89px;font-size:11px;color:#1c2026;">09:00</span><span class="t" style="left:406.12px;top:440.89px;font-size:11px;color:#1c2026;">10:00</span><span class="t" style="left:491.62px;top:440.89px;font-size:11px;color:#1c2026;">11:00</span><span class="t" style="left:576.30px;top:440.89px;font-size:11px;color:#1c2026;">12:00</span><span class="t" style="left:661.39px;top:440.89px;font-size:11px;color:#1c2026;">13:00</span><span class="t" style="left:746.48px;top:440.89px;font-size:11px;color:#1c2026;">14:00</span><span class="t" style="left:831.57px;top:440.89px;font-size:11px;color:#1c2026;">15:00</span><span class="t" style="left:916.66px;top:440.89px;font-size:11px;color:#1c2026;">16:00</span><span class="t" style="left:1001.75px;top:440.89px;font-size:11px;color:#1c2026;">17:00</span><span class="t" style="left:1086.84px;top:440.89px;font-size:11px;color:#1c2026;">18:00</span><span class="t" style="left:1171.93px;top:440.89px;font-size:11px;color:#1c2026;">19:00</span><span class="t" style="left:1257.02px;top:440.89px;font-size:11px;color:#1c2026;">20:00</span><span class="t" style="left:1342.11px;top:440.89px;font-size:11px;color:#1c2026;">21:00</span><span class="t" style="left:1427.20px;top:440.89px;font-size:11px;color:#1c2026;">22:00</span><span class="t" style="left:1512.29px;top:440.89px;font-size:11px;color:#1c2026;">23:00</span><span class="t" style="left:1597.28px;top:440.89px;font-size:11px;color:#1c2026;">Tue 8</span><span class="t" style="left:1682.47px;top:440.89px;font-size:11px;color:#1c2026;">01:00</span><span class="t" style="left:1767.56px;top:440.89px;font-size:11px;color:#1c2026;">02:00</span><span class="t" style="left:1852.65px;top:440.89px;font-size:11px;color:#1c2026;">03:00</span><span class="t" style="left:1937.74px;top:440.89px;font-size:11px;color:#1c2026;">04:00</span><span class="t" style="left:2022.83px;top:440.89px;font-size:11px;color:#1c2026;">05:00</span><span class="t" style="left:2107.92px;top:440.89px;font-size:11px;color:#1c2026;">06:00</span><span class="t" style="left:2193.01px;top:440.89px;font-size:11px;color:#1c2026;">07:00</span><span class="t" style="left:2278.10px;top:440.89px;font-size:11px;color:#1c2026;">08:00</span><span class="t" style="left:1201.70px;top:465.13px;font-size:12.6px;color:#5f6b75;letter-spacing:-0.128px;">Monitor Created</span><span class="t" style="left:314.00px;top:483.39px;font-size:11.467710355289698px;color:#1c2b34;letter-spacing:-0.123px;">Alert</span><span class="t" style="left:378.00px;top:483.89px;font-size:10.881px;color:#1c2b34;letter-spacing:-0.350px;">OK</span><span class="t" style="left:432.50px;top:483.56px;font-size:11.271779114256242px;color:#1c2b34;letter-spacing:-0.265px;">No Data</span><span class="t" style="left:513.10px;top:483.38px;font-size:11.485607358383678px;color:#1c2b34;letter-spacing:-0.165px;">Warn</span><span class="t" style="left:579.70px;top:483.20px;font-size:11.7px;color:#1c2b34;">Muted</span><span class="t" style="left:182.40px;top:532.44px;font-size:14.6px;color:#1c2b34;letter-spacing:0.282px;">History</span><span class="t" style="left:246.50px;top:533.12px;font-size:12.5px;color:#fff;font-weight:700;">?</span><span class="t" style="left:297.94px;top:683.91px;font-size:11.8px;color:#4a555c;">0</span><span class="t" style="left:297.94px;top:655.08px;font-size:11.8px;color:#4a555c;">5</span><span class="t" style="left:291.38px;top:626.24px;font-size:11.8px;color:#4a555c;">10</span><span class="t" style="left:291.38px;top:597.41px;font-size:11.8px;color:#4a555c;">15</span><span class="t" style="left:336.61px;top:696.57px;font-size:11.5px;color:#5f6b75;">09:00</span><span class="t" style="left:421.04px;top:696.57px;font-size:11.5px;color:#5f6b75;">10:00</span><span class="t" style="left:505.89px;top:696.57px;font-size:11.5px;color:#5f6b75;">11:00</span><span class="t" style="left:589.90px;top:696.57px;font-size:11.5px;color:#5f6b75;">12:00</span><span class="t" style="left:674.33px;top:696.57px;font-size:11.5px;color:#5f6b75;">13:00</span><span class="t" style="left:758.76px;top:696.57px;font-size:11.5px;color:#5f6b75;">14:00</span><span class="t" style="left:843.19px;top:696.57px;font-size:11.5px;color:#5f6b75;">15:00</span><span class="t" style="left:927.62px;top:696.57px;font-size:11.5px;color:#5f6b75;">16:00</span><span class="t" style="left:1012.05px;top:696.57px;font-size:11.5px;color:#5f6b75;">17:00</span><span class="t" style="left:1096.48px;top:696.57px;font-size:11.5px;color:#5f6b75;">18:00</span><span class="t" style="left:1180.91px;top:696.57px;font-size:11.5px;color:#5f6b75;">19:00</span><span class="t" style="left:1265.34px;top:696.57px;font-size:11.5px;color:#5f6b75;">20:00</span><span class="t" style="left:1349.77px;top:696.57px;font-size:11.5px;color:#5f6b75;">21:00</span><span class="t" style="left:1434.20px;top:696.57px;font-size:11.5px;color:#5f6b75;">22:00</span><span class="t" style="left:1518.63px;top:696.57px;font-size:11.5px;color:#1c2b34;">23:00</span><span class="t" style="left:1602.96px;top:696.57px;font-size:11.5px;color:#5f6b75;">Tue 8</span><span class="t" style="left:1687.49px;top:696.57px;font-size:11.5px;color:#5f6b75;">01:00</span><span class="t" style="left:1771.92px;top:696.57px;font-size:11.5px;color:#5f6b75;">02:00</span><span class="t" style="left:1856.35px;top:696.57px;font-size:11.5px;color:#5f6b75;">03:00</span><span class="t" style="left:1940.78px;top:696.57px;font-size:11.5px;color:#5f6b75;">04:00</span><span class="t" style="left:2025.21px;top:696.57px;font-size:11.5px;color:#5f6b75;">05:00</span><span class="t" style="left:2109.64px;top:696.57px;font-size:11.5px;color:#5f6b75;">06:00</span><span class="t" style="left:2194.07px;top:696.57px;font-size:11.5px;color:#5f6b75;">07:00</span><span class="t" style="left:2278.50px;top:696.57px;font-size:11.5px;color:#5f6b75;">08:00</span><span class="t" style="left:1580.40px;top:726.54px;font-size:14.24536467119561px;color:#fff;letter-spacing:-0.282px;">2h</span><span class="t" style="left:101.30px;top:816.87px;font-size:13.5px;color:#838b91;letter-spacing:0.992px;">2h</span><span class="t" style="left:132.00px;top:816.12px;font-size:13.330149211866296px;color:#1c2b34;font-weight:700;letter-spacing:-0.183px;">EVALUATION GRAPH</span><span class="t" style="left:732.20px;top:817.56px;font-size:12.8px;color:#fff;font-weight:700;">?</span><span class="t" style="left:303.73px;top:1113.61px;font-size:11.8px;color:#1c2b34;">0k</span><span class="t" style="left:303.73px;top:1079.04px;font-size:11.8px;color:#1c2b34;">5k</span><span class="t" style="left:297.17px;top:1044.47px;font-size:11.8px;color:#1c2b34;">10k</span><span class="t" style="left:297.17px;top:1009.90px;font-size:11.8px;color:#1c2b34;">15k</span><span class="t" style="left:297.17px;top:975.33px;font-size:11.8px;color:#1c2b34;">20k</span><span class="t" style="left:297.17px;top:940.76px;font-size:11.8px;color:#1c2b34;">25k</span><span class="t" style="left:297.17px;top:906.19px;font-size:11.8px;color:#1c2b34;">30k</span><span class="t" style="left:297.17px;top:871.62px;font-size:11.8px;color:#1c2b34;">35k</span><span class="t" style="left:329.80px;top:1125.92px;font-size:11.2px;color:#1c2b34;">22:45</span><span class="t" style="left:413.75px;top:1125.92px;font-size:11.2px;color:#1c2b34;">22:50</span><span class="t" style="left:497.70px;top:1125.92px;font-size:11.2px;color:#1c2b34;">22:55</span><span class="t" style="left:581.65px;top:1125.92px;font-size:11.2px;color:#1c2b34;">23:00</span><span class="t" style="left:665.60px;top:1125.92px;font-size:11.2px;color:#1c2b34;">23:05</span><span class="t" style="left:749.55px;top:1125.92px;font-size:11.2px;color:#1c2b34;">23:10</span><span class="t" style="left:833.50px;top:1125.92px;font-size:11.2px;color:#1c2b34;">23:15</span><span class="t" style="left:917.45px;top:1125.92px;font-size:11.2px;color:#1c2b34;">23:20</span><span class="t" style="left:1001.40px;top:1125.92px;font-size:11.2px;color:#1c2b34;">23:25</span><span class="t" style="left:1085.35px;top:1125.92px;font-size:11.2px;color:#1c2b34;">23:30</span><span class="t" style="left:1169.30px;top:1125.92px;font-size:11.2px;color:#1c2b34;">23:35</span><span class="t" style="left:1253.25px;top:1125.92px;font-size:11.2px;color:#1c2b34;">23:40</span><span class="t" style="left:1337.20px;top:1125.92px;font-size:11.2px;color:#1c2b34;">23:45</span><span class="t" style="left:1421.15px;top:1125.92px;font-size:11.2px;color:#1c2b34;">23:50</span><span class="t" style="left:1505.10px;top:1125.92px;font-size:11.2px;color:#1c2b34;">23:55</span><span class="t" style="left:1588.95px;top:1125.92px;font-size:11.2px;color:#1c2b34;">Tue 8</span><span class="t" style="left:1673.00px;top:1125.92px;font-size:11.2px;color:#1c2b34;">00:05</span><span class="t" style="left:1756.95px;top:1125.92px;font-size:11.2px;color:#1c2b34;">00:10</span><span class="t" style="left:1840.90px;top:1125.92px;font-size:11.2px;color:#1c2b34;">00:15</span><span class="t" style="left:1924.85px;top:1125.92px;font-size:11.2px;color:#1c2b34;">00:20</span><span class="t" style="left:2008.80px;top:1125.92px;font-size:11.2px;color:#1c2b34;">00:25</span><span class="t" style="left:2092.75px;top:1125.92px;font-size:11.2px;color:#1c2b34;">00:30</span><span class="t" style="left:2176.70px;top:1125.92px;font-size:11.2px;color:#1c2b34;">00:35</span><span class="t" style="left:2260.65px;top:1125.92px;font-size:11.2px;color:#1c2b34;">00:40</span><span class="t" style="left:326.50px;top:1101.16px;font-size:11.981238856216887px;color:#e8475a;font-weight:700;letter-spacing:-0.350px;">&gt; 1</span><span class="t" style="left:352.90px;top:1104.61px;font-size:10.270859805167301px;color:#e6a21a;letter-spacing:-0.350px;">&lt;= 1</span><span class="t" style="left:1607.90px;top:575.06px;font-size:11.503983811812319px;color:#68727a;letter-spacing:-0.350px;z-index:22">METRIC</span><span class="t" style="left:1607.90px;top:593.17px;font-size:12.5px;color:#1c2b34;letter-spacing:0.117px;z-index:22">p90:trace.aws.sqs{env:dev,service:fulfill-bulk-orders-dev-</span><span class="t" style="left:1607.90px;top:609.42px;font-size:12.5px;color:#1c2b34;z-index:22">queue}</span><span class="t" style="left:1641.80px;top:643.68px;font-size:15.5px;color:#1c2b34;letter-spacing:-0.122px;z-index:22">Find correlated metrics</span><span class="t" style="left:1641.80px;top:678.88px;font-size:15.5px;color:#1c2b34;letter-spacing:-0.141px;z-index:22">No related <u>h</u>osts</span><span class="t" style="left:1641.80px;top:714.08px;font-size:15.5px;color:#1c2b34;letter-spacing:-0.104px;z-index:22">No rel<u>a</u>ted containers</span><span class="t" style="left:1641.82px;top:749.52px;font-size:15.212105756986798px;color:#1c2b34;letter-spacing:-0.142px;z-index:22">No related <u>p</u>rocesses</span><span class="t" style="left:1641.81px;top:784.61px;font-size:15.342449162996843px;color:#1c2b34;letter-spacing:-0.075px;z-index:22">No related <u>l</u>ogs</span><span class="t" style="left:1642.80px;top:819.94px;font-size:15.189453251644673px;color:#fff;letter-spacing:-0.147px;z-index:22">View related <u>t</u>races</span><span class="t" style="left:1641.83px;top:855.25px;font-size:15.061787362753426px;color:#1c2b34;letter-spacing:-0.256px;z-index:22">No <u>R</u>UM events</span><span class="t" style="left:1641.80px;top:890.08px;font-size:15.5px;color:#1c2b34;letter-spacing:-0.046px;z-index:22">N<u>o</u> related profiles</span>
</div></body></html>
